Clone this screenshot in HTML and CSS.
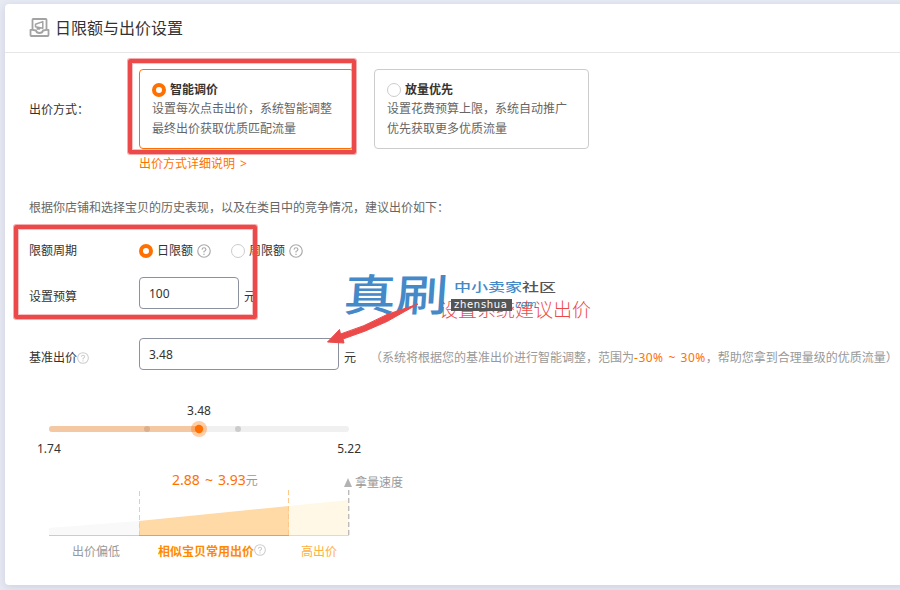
FILE: index.html
```html
<!DOCTYPE html>
<html lang="zh-CN">
<head>
  <meta charset="utf-8">
  <title>日限额与出价设置</title>
  <link rel="stylesheet" href="styles.css">
</head>
<body>
  <div class="panel">
    <div class="panel-header">
      <svg class="panel-icon" width="22" height="20" viewBox="0 0 22 20" fill="none" stroke="#a3a3a3" stroke-width="1.8" stroke-linejoin="round">
        <path d="M3.5 12V1.8Q3.5 1 4.3 1H16.7Q17.5 1 17.5 1.8V12"/>
        <path d="M3.3 11.8H1.500V17.2Q1.500 18 2.300 18H18.7Q19.5 18 19.5 17.2V11.8H17.7L14 12.5Q13.5 15 10.5 15T7 12.5Z"/>
        <path d="M6.5 6.2L13.8 3.6V10.2L6.5 8.8ZM8.3 9.2V11H10.5V9.6" stroke-width="1.5"/>
      </svg>
      <h1>日限额与出价设置</h1>
    </div>

    <div class="panel-body">
      <div class="row row-mode">
        <span class="label">出价方式：</span>
        <div class="mode active">
          <div class="mode-title"><i class="radio checked"></i>智能调价</div>
          <p>设置每次点击出价，系统智能调整<br>最终出价获取优质匹配流量</p>
        </div>
        <div class="mode">
          <div class="mode-title"><i class="radio"></i>放量优先</div>
          <p>设置花费预算上限，系统自动推广<br>优先获取更多优质流量</p>
        </div>
      </div>
      <a class="detail-link">出价方式详细说明 &gt;</a>

      <p class="tip">根据你店铺和选择宝贝的历史表现，以及在类目中的竞争情况，建议出价如下：</p>

      <div class="row row-period">
        <span class="label">限额周期</span>
        <span class="option"><i class="radio checked"></i>日限额
          <svg class="help" viewBox="0 0 13 13"><circle cx="6.5" cy="6.5" r="5.8"/><path d="M4.7 5.2Q4.8 3.5 6.5 3.5T8.3 5.1Q8.3 6 6.5 7V8"/><path d="M6.5 9V10.2"/></svg>
        </span>
        <span class="option"><i class="radio"></i>周限额
          <svg class="help" viewBox="0 0 13 13"><circle cx="6.5" cy="6.5" r="5.8"/><path d="M4.7 5.2Q4.8 3.5 6.5 3.5T8.3 5.1Q8.3 6 6.5 7V8"/><path d="M6.5 9V10.2"/></svg>
        </span>
      </div>

      <div class="row row-budget">
        <span class="label">设置预算</span>
        <input class="field" type="text" value="100">
        <span class="unit">元</span>
      </div>

      <div class="row row-price">
        <span class="label">基准出价<svg class="help small" viewBox="0 0 13 13"><circle cx="6.5" cy="6.5" r="5.8"/><path d="M4.7 5.2Q4.8 3.5 6.5 3.5T8.3 5.1Q8.3 6 6.5 7V8"/><path d="M6.5 9V10.2"/></svg></span>
        <input class="field wide" type="text" value="3.48">
        <span class="unit">元</span>
        <span class="hint">（系统将根据您的基准出价进行智能调整，范围为<em>-30% ~ 30%</em>，帮助您拿到合理量级的优质流量）</span>
      </div>

      <div class="slider">
        <div class="slider-value">3.48</div>
        <svg class="slider-track" width="300" height="16" viewBox="0 0 300 16">
          <rect y="5" width="300" height="6" rx="3" fill="#f0f0f0"/>
          <path d="M3 5H150V11H3A3 3 0 0 1 3 5Z" fill="#f5c8a4"/>
          <circle cx="98" cy="8" r="3" fill="#dcb08d"/>
          <circle cx="189" cy="8" r="3" fill="#ccc"/>
          <circle cx="150" cy="8" r="8" fill="#ff7000" fill-opacity=".35"/>
          <circle cx="150" cy="8" r="4.2" fill="#ff7000"/>
        </svg>
        <div class="slider-ends"><span>1.74</span><span>5.22</span></div>
      </div>

      <div class="chart">
        <div class="chart-top">
          <span class="range"><em>2.88 ~ 3.93</em>元</span>
          <span class="speed"><i class="triangle"></i>拿量速度</span>
        </div>
        <svg width="301" height="46" viewBox="0 0 301 46">
          <path d="M0 38L90 31V45H0Z" fill="#f9f9f9"/>
          <path d="M90 31L240 16V45H90Z" fill="#ffd9a6"/>
          <path d="M240 16L300 10V45H240Z" fill="#fff8e6"/>
          <path d="M0 45.5H90" stroke="#ccc"/>
          <path d="M90 45.5H240" stroke="#ff9c2b"/>
          <path d="M240 45.5H300" stroke="#ffd97a"/>
          <path d="M90.5 1V45M239.5 0V45" stroke="#fdc98a" stroke-dasharray="5 3"/>
          <path d="M299.7 0V45" stroke="#bbb" stroke-width="1.4" stroke-dasharray="5 3"/>
        </svg>
        <div class="chart-labels">
          <span class="low">出价偏低</span>
          <span class="common">相似宝贝常用出价<svg class="help small" viewBox="0 0 13 13"><circle cx="6.5" cy="6.5" r="5.8"/><path d="M4.7 5.2Q4.8 3.5 6.5 3.5T8.3 5.1Q8.3 6 6.5 7V8"/><path d="M6.5 9V10.2"/></svg></span>
          <span class="high">高出价</span>
        </div>
      </div>
    </div>
  </div>

  <!-- annotations drawn over the form -->
  <div class="mark mark-mode"></div>
  <div class="mark mark-budget"></div>
  <div class="note">设置系统建议出价</div>
  <div class="watermark">
    <span class="wm-name">真刷</span>
    <div class="wm-side">
      <div class="wm-title">中小卖家<b>社区</b></div>
      <div class="wm-site"><span>zhenshua</span>.com</div>
    </div>
  </div>
  <svg class="arrow" width="96" height="46" viewBox="0 0 96 46">
    <path d="M1.500 39L13.500 26.500L14.500 31Q38 24 61 11.500L92 1L61 18.500Q39 29 17 36L18 40Z" fill="#ec4a4a" stroke="#ec4a4a" stroke-linejoin="round"/>
  </svg>
</body>
</html>
```
FILE: styles.css
```css
* {
  box-sizing: border-box;
}

body {
  margin: 0;
  height: 590px;
  padding: 4px 0 0 5px;
  overflow: hidden;
  position: relative;
  background: #e7eaf3;
  color: #333;
  font: 12px/20px "Noto Sans", "Noto Sans CJK SC", sans-serif;
}

h1, p {
  margin: 0;
}

em, i {
  font-style: normal;
}

.panel {
  width: 920px;
  height: 581px;
  background: #fff;
  border-radius: 4px;
  box-shadow: 0 2px 8px rgba(60, 70, 100, .15);
}

.panel-header {
  display: flex;
  align-items: center;
  gap: 4px;
  height: 49px;
  padding-left: 24px;
  border-bottom: 1px solid #e6e6e6;
}

.panel-header h1 {
  font-size: 16px;
  font-weight: 400;
}

.panel-body {
  padding: 16px 0 0 24px;
}

.row {
  display: flex;
  align-items: center;
  white-space: nowrap;
}

.label {
  width: 110px;
  flex: none;
}

.row-mode .label {
  padding-top: 2px;
}

.mode {
  width: 215px;
  height: 80px;
  margin-right: 20px;
  padding: 10px 0 0 12px;
  border: 1px solid #ccc;
  border-radius: 4px;
  color: #666;
}

.mode.active {
  border-color: #ff7000;
}

.mode-title {
  display: flex;
  align-items: center;
  color: #333;
  font-weight: 700;
}

.mode p {
  margin-top: -1px;
}

.radio {
  width: 14px;
  height: 14px;
  margin-right: 4px;
  border: 1px solid #ccc;
  border-radius: 50%;
  background: #fff;
}

.radio.checked {
  border: 4px solid #ff7000;
}

.detail-link {
  display: block;
  margin: 5px 0 0 110px;
  color: #ff7000;
  word-spacing: 2px;
}

.tip {
  margin-top: 24px;
  color: #666;
}

.row-period {
  height: 20px;
  margin-top: 23px;
}

.option {
  display: flex;
  align-items: center;
  margin-right: 20px;
}

.help {
  width: 14px;
  height: 14px;
  margin-left: 4px;
  fill: none;
  stroke: #aaa;
  stroke-width: 1.1;
}

.help.small {
  width: 12px;
  height: 12px;
  margin-left: 0;
  vertical-align: -2px;
  stroke: #ccc;
}

.row-budget {
  margin-top: 16px;
}

.row-budget .label,
.row-budget .unit {
  padding-top: 8px;
}

.field {
  width: 100px;
  height: 32px;
  padding: 0 9px;
  border: 1px solid #8c91a0;
  border-radius: 4px;
  color: #333;
  font: inherit;
}

.field.wide {
  width: 200px;
}

.unit {
  width: 12px;
  margin-left: 5px;
}

.row-price {
  margin-top: 29px;
}

.row-price .label,
.row-price .unit,
.row-price .hint {
  padding-top: 8px;
}

.hint {
  margin-left: 14px;
  color: #999;
}

.hint em,
.range em {
  color: #ff7000;
}

.hint em {
  letter-spacing: .5px;
  word-spacing: 1.2px;
}

.slider {
  width: 326px;
  margin: 31px 0 0 7px;
}

.slider-value {
  text-align: center;
}

.slider-track {
  display: block;
  margin: 0 0 2px 13px;
}

.slider-ends {
  display: flex;
  justify-content: space-between;
  padding-left: 1px;
}

.slider-ends span:last-child {
  margin-right: 1px;
}

.chart {
  width: 301px;
  margin: 11px 0 0 20px;
}

.chart svg {
  display: block;
}

.chart-top {
  display: flex;
  height: 20px;
  padding-left: 123px;
  white-space: nowrap;
  color: #999;
}

.range {
  flex: none;
  width: 172px;
}

.range em {
  font-size: 14px;
  word-spacing: 1.5px;
}

.speed {
  display: flex;
  align-items: center;
  padding-top: 5px;
}

.triangle {
  flex: none;
  margin-right: 3px;
  border: 4.5px solid transparent;
  border-top: 0;
  border-bottom: 9px solid #b3b3b3;
}

.chart-labels {
  display: grid;
  grid-template-columns: 90px 150px 60px;
  margin-top: 6px;
  color: #999;
}

.chart-labels span {
  white-space: nowrap;
}

.low {
  padding-left: 23px;
}

.common {
  display: flex;
  padding-left: 19px;
  color: #ff8a00;
  font-weight: 700;
}

.common .help {
  margin-top: 2px;
}

.high {
  padding-left: 12px;
  color: #ffb040;
}

.mark {
  position: absolute;
  border: 4px solid #ec4a4a;
  border-radius: 2px;
  box-shadow: 0 0 0 1px rgba(236, 74, 74, .45), inset 0 0 0 1px rgba(236, 74, 74, .35);
}

.mark-mode {
  left: 128px;
  top: 59px;
  width: 228px;
  height: 95px;
}

.mark-budget {
  left: 14px;
  top: 225px;
  width: 243px;
  height: 94px;
}

.note {
  position: absolute;
  left: 439px;
  top: 300px;
  color: #ec4a4a;
  font-size: 19px;
  font-weight: 300;
  white-space: nowrap;
}

.watermark {
  position: absolute;
  left: 344px;
  top: 270px;
  display: flex;
  color: #4489c8;
}

.wm-name {
  width: 110px;
  font-size: 52px;
  line-height: 48px;
  font-weight: 500;
  transform: skewX(-4deg) scaleY(.84);
}

.wm-side {
  padding-top: 8px;
}

.wm-title {
  font-size: 17px;
  font-weight: 500;
  transform: scaleY(.72);
}

.wm-title b {
  color: #555;
  font-weight: 500;
}

.wm-site {
  margin: 1px 0 0 -3px;
  font: italic 10px/12px "DejaVu Sans", sans-serif;
}

.wm-site span {
  display: inline-block;
  width: 61px;
  padding-left: 3px;
  background: #555;
  color: #fff;
  font-style: normal;
  letter-spacing: .7px;
}

.arrow {
  position: absolute;
  left: 326px;
  top: 303px;
}
```
